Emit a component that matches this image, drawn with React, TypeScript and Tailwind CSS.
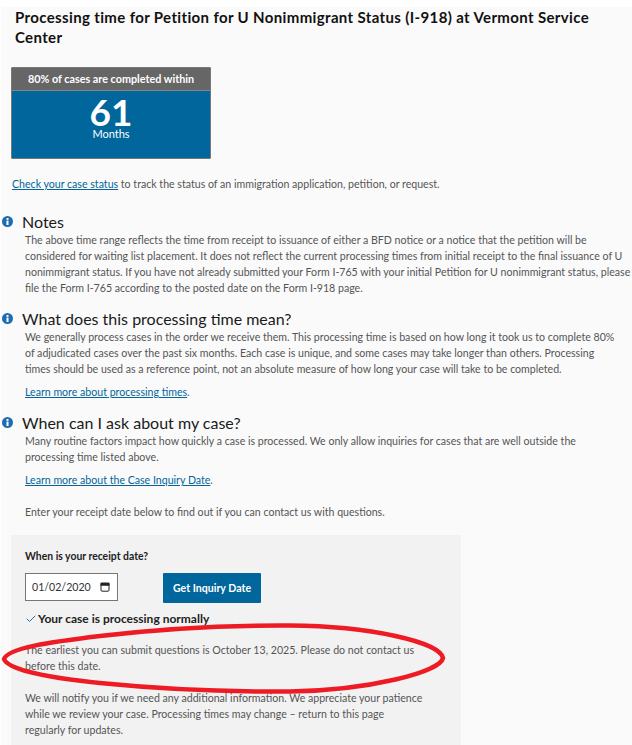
import { Check } from 'lucide-react';

const InfoDot = () => (
    <svg viewBox="0 0 12 12" className="w-[11px] h-[11px] shrink-0 mt-[3px]">
        <circle cx="6" cy="6" r="6" fill="#1f6db0" />
        <rect x="4.9" y="2.2" width="2.2" height="2" fill="#fff" />
        <rect x="4.9" y="5" width="2.2" height="4.8" fill="#fff" />
    </svg>
);

const Section = ({ title, children }: { title: string; children: React.ReactNode }) => (
    <div className="flex gap-[9px] pl-px">
        <InfoDot />
        <div>
            <h2 className="text-[16px] leading-[18px] text-[#1a1a1a]">{title}</h2>
            <div className="text-[10.6px] leading-[16px] text-[#555] mt-px ml-[3px]">{children}</div>
        </div>
    </div>
);

const App = () => {
    return (
        <div className="relative w-[632px] h-[745px] overflow-hidden bg-white pt-[7px] pl-px font-['Lato',sans-serif]">
            <div className="h-full bg-[#fafafa]">
                <h1 className="pl-[14px] pr-[20px] text-[15px] leading-[20px] font-bold tracking-[0.36px] text-[#111]">
                    Processing time for Petition for U Nonimmigrant Status (I-918) at Vermont Service Center
                </h1>

                <div className="ml-[10px] mt-[20px] w-[200px] border border-[#777] rounded-[1px] text-white text-center">
                    <div className="h-[23px] bg-[#666] text-[10.8px] leading-[22px] font-bold border-b border-[#888]">80% of cases are completed within</div>
                    <div className="h-[67px] bg-[#00669c] pt-[4px]">
                        <div className="text-[37px] leading-[33px] font-bold">61</div>
                        <div className="text-[11px] leading-[12px]">Months</div>
                    </div>
                </div>

                <p className="ml-[11px] mt-[17px] text-[10.6px] leading-[16px] text-[#555]">
                    <a className="text-[#00669c] underline">Check your case status</a> to track the status of an immigration application, petition, or request.
                </p>

                <div className="mt-[21px] flex flex-col gap-[14px]">
                    <Section title="Notes">
                        <p className="w-[606px]">
                            The above time range reflects the time from receipt to issuance of either a BFD notice or a notice that the petition will be considered for waiting list placement. It does not reflect the current processing times from initial receipt to the final issuance of U nonimmigrant status. If you have not already submitted your Form I-765 with your initial Petition for U nonimmigrant status, please file the Form I-765 according to the posted date on the Form I-918 page.
                        </p>
                    </Section>
                    <Section title="What does this processing time mean?">
                        <p className="w-[590px]">
                            We generally process cases in the order we receive them. This processing time is based on how long it took us to complete 80% of adjudicated cases over the past six months. Each case is unique, and some cases may take longer than others. Processing times should be used as a reference point, not an absolute measure of how long your case will take to be completed.
                        </p>
                        <p className="mt-[7px]"><a className="text-[#00669c] underline">Learn more about processing times</a>.</p>
                    </Section>
                    <Section title="When can I ask about my case?">
                        <p className="w-[590px]">
                            Many routine factors impact how quickly a case is processed. We only allow inquiries for cases that are well outside the processing time listed above.
                        </p>
                        <p className="mt-[7px]"><a className="text-[#00669c] underline">Learn more about the Case Inquiry Date</a>.</p>
                        <p className="mt-[16px]">Enter your receipt date below to find out if you can contact us with questions.</p>
                    </Section>
                </div>

                <div className="ml-[10px] mt-[15px] w-[450px] h-[300px] bg-[#f2f2f2] pl-[14px] pr-[38px] pt-[13px] text-[10.6px] leading-[16px] text-[#555]">
                    <div className="font-bold text-[#222] text-[10.4px] leading-[16px]">When is your receipt date?</div>
                    <div className="mt-[9px] flex items-start gap-[45px]">
                        <div className="w-[93px] h-[28px] bg-white border border-[#767676] flex items-center justify-between pl-[6px] pr-[7px] text-[10.6px] text-[#333]">
                            <span>01/02/2020</span>
                            <svg viewBox="0 0 10 10" className="w-[10px] h-[10px]" fill="none" stroke="#222" strokeWidth="1">
                                <rect x="1" y="1.2" width="8" height="8" rx="1" />
                                <rect x="1" y="1.2" width="8" height="2" fill="#222" />
                            </svg>
                        </div>
                        <button className="w-[98px] h-[30px] bg-[#00669c] rounded-[1px] text-white font-bold text-[10.6px]">Get Inquiry Date</button>
                    </div>
                    <div className="mt-[8px] flex items-center gap-px text-[12px] font-bold text-[#222]">
                        <Check className="w-[12px] h-[12px] text-[#2f6f9f]" strokeWidth={2} />
                        Your case is processing normally
                    </div>
                    <p className="mt-[15px]">The earliest you can submit questions is October 13, 2025. Please do not contact us before this date.</p>
                    <p className="mt-[16px]">We will notify you if we need any additional information. We appreciate your patience while we review your case. Processing times may change – return to this page regularly for updates.</p>
                </div>
            </div>

            {/* hand drawn red circle on top of the screenshot */}
            <svg className="absolute left-0 top-0 pointer-events-none" width="632" height="745" viewBox="0 0 632 745" fill="none">
                <path
                    d="M4 659 C8 648 50 642 100 636 C150 630 210 625 290 625.5 C370 626 440 642 443 658 C440 672 370 690 290 691.5 C220 692 160 689 100 683 C50 678 8 670 4 659 Z"
                    stroke="#ed1c24"
                    strokeWidth="4.5"
                    strokeLinejoin="round"
                />
            </svg>
        </div>
    );
};

export default App;
